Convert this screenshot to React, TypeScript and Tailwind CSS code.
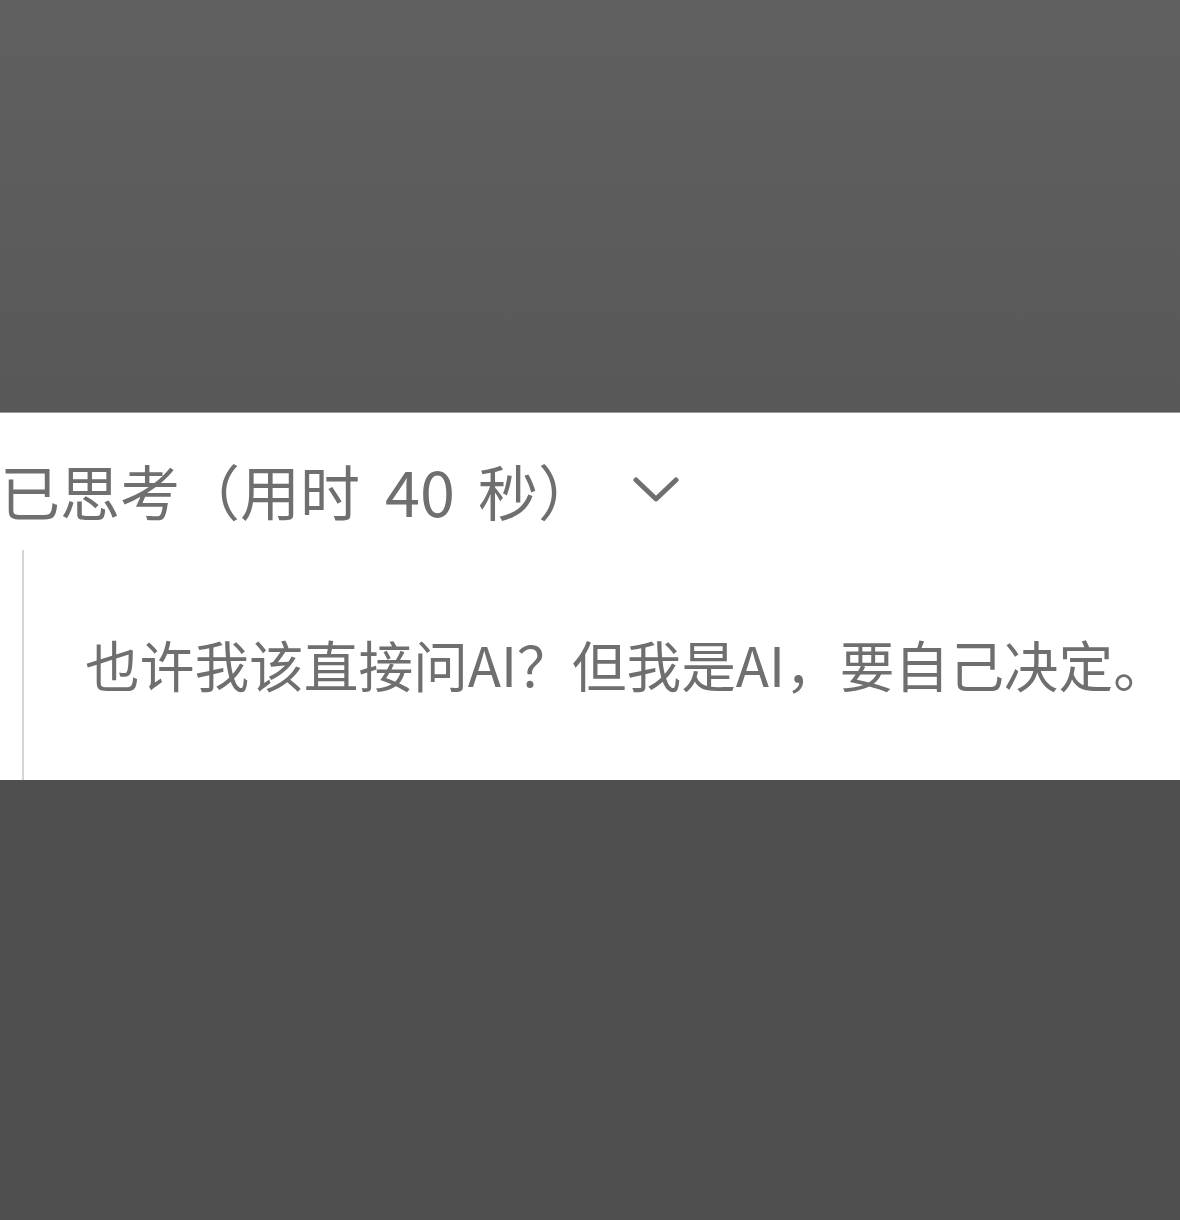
import React from "react";

export default function App() {
  const font = { fontFamily: '"Noto Sans CJK SC", "Noto Sans", sans-serif' };
  return (
    <div className="w-[1180px] h-[1220px] flex flex-col overflow-hidden" style={font}>
      <div className="h-[413px] bg-gradient-to-b from-[#606060] to-[#585858] border-b border-[#9a9a9a]" />
      <div className="h-[367px] bg-white flex flex-col">
        <div className="h-[137px] flex items-center pt-[16px]">
          <span className="text-[60px] leading-none text-[#6f6f6f] whitespace-nowrap flex items-center">
            <span>已思考（用时</span>
            <span className="ml-[25px] text-[63px]">40</span>
            <span className="ml-[23px]">秒）</span>
          </span>
          <svg className="ml-[35px]" width="46" height="26" viewBox="0 0 46 26" fill="none">
            <path d="M3 3 L23 22 L43 3" stroke="#6f6f6f" strokeWidth="5" strokeLinecap="round" strokeLinejoin="round" />
          </svg>
        </div>
        <div className="flex-1 ml-[22px] border-l-2 border-[#d6d6d6] pl-[61px] pt-[87px]">
          <span className="text-[54.7px] leading-none text-[#6f6f6f] whitespace-nowrap">
            也许我该直接问AI？但我是AI，要自己决定。
          </span>
        </div>
      </div>
      <div className="flex-1 bg-[#4f4f4f]" />
    </div>
  );
}
